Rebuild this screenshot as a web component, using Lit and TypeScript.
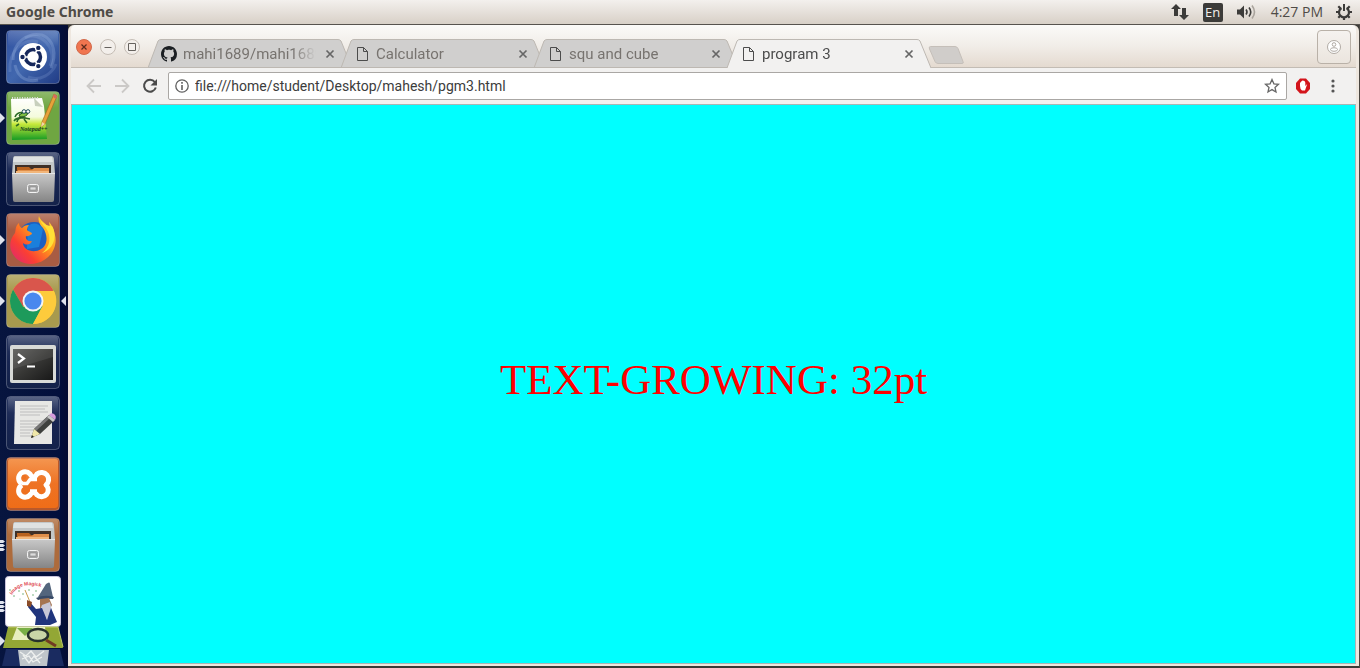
import { LitElement, html, css, svg } from "lit";
import { customElement, property } from "lit/decorators.js";

const page = svg`<path d="M3.500 1.500h6l4 4v9h-10zM9.500 1.500v4h4" fill="none" stroke="#4c4c4c" stroke-width="1"/>`;
const octocat = svg`<path fill="#1b1f23" d="M8 0C3.580 0 0 3.580 0 8c0 3.540 2.290 6.530 5.470 7.590.4.070.55-.17.55-.38 0-.19-.01-.82-.01-1.490-2.010.37-2.530-.49-2.690-.94-.09-.23-.48-.94-.82-1.130-.28-.15-.68-.52-.01-.53.63-.01 1.080.58 1.230.82.72 1.210 1.870.87 2.330.66.07-.52.28-.87.51-1.070-1.780-.2-3.640-.89-3.640-3.950 0-.87.31-1.590.82-2.150-.08-.2-.36-1.020.08-2.120 0 0 .67-.21 2.200.82.64-.18 1.320-.27 2-.27s1.360.09 2 .27c1.530-1.040 2.200-.82 2.200-.82.44 1.100.16 1.920.08 2.120.51.56.82 1.270.82 2.150 0 3.070-1.870 3.750-3.650 3.950.29.25.54.73.54 1.480 0 1.070-.01 1.930-.01 2.200 0 .21.15.46.55.38A8.010 8.010 0 0 0 16 8c0-4.420-3.580-8-8-8z"/>`;

const pips = {
  one: svg`<path d="M0 22l5 5-5 5z" fill="#dfe3ee"/>`,
  two: svg`<path d="M0 22h3l2 1.500-2 1.500H0zM0 26h3l2 1.500-2 1.500H0zM0 30h3l2 1.500-2 1.500H0z" fill="#dfe3ee"/>`,
  active: svg`<path d="M0 22l5 5-5 5zM66 22l-5 5 5 5z" fill="#dfe3ee"/>`,
};

const tile = (fill: string) => svg`
  <rect x="6.500" y="0.500" width="53" height="53" rx="4" fill=${fill} stroke="#ffffff" stroke-opacity=".25"/>
  <rect x="8" y="1" width="50" height="16" rx="3" fill="url(#gloss)"/>`;

const defs = svg`<defs>
  <linearGradient id="gloss" x1="0" y1="0" x2="0" y2="1"><stop offset="0" stop-color="#fff" stop-opacity=".22"/><stop offset="1" stop-color="#fff" stop-opacity="0"/></linearGradient>
  <linearGradient id="night" x1="0" y1="0" x2="0" y2="1"><stop offset="0" stop-color="#2a3862"/><stop offset=".5" stop-color="#182652"/><stop offset="1" stop-color="#14224a"/></linearGradient>
  <linearGradient id="steel" x1="0" y1="0" x2="0" y2="1"><stop offset="0" stop-color="#c9c9c9"/><stop offset="1" stop-color="#858585"/></linearGradient>
  <linearGradient id="dash" x1="0" y1="0" x2="1" y2="1"><stop offset="0" stop-color="#2e4fa0"/><stop offset=".5" stop-color="#4167ae"/><stop offset="1" stop-color="#213c86"/></linearGradient>
  <linearGradient id="pad" x1="0" y1="0" x2="0" y2="1"><stop offset="0" stop-color="#fff"/><stop offset=".45" stop-color="#f4fbdc"/><stop offset=".62" stop-color="#c7e93a"/><stop offset="1" stop-color="#149b24"/></linearGradient>
  <linearGradient id="fox" x1="1" y1="0" x2="0" y2="1"><stop offset="0" stop-color="#ffe93b"/><stop offset=".4" stop-color="#ff9a1c"/><stop offset=".7" stop-color="#fb3f33"/><stop offset="1" stop-color="#d9247c"/></linearGradient>
  <linearGradient id="screen" x1="0" y1="0" x2="1" y2="1"><stop offset="0" stop-color="#5a5a58"/><stop offset=".5" stop-color="#373735"/><stop offset="1" stop-color="#181818"/></linearGradient>
  <linearGradient id="xampp" x1="0" y1="0" x2="0" y2="1"><stop offset="0" stop-color="#f4954f"/><stop offset=".5" stop-color="#ee7324"/><stop offset="1" stop-color="#ef6d18"/></linearGradient>
</defs>`;

const cabinet = svg`
  <path d="M15 4h36q3 0 3 4l1 14H12l1-14q0-4 2-4z" fill="#c3c7c8"/>
  <path d="M14 5h38l1 5H13z" fill="#dfe2e2"/>
  <path d="M15 13h36v11H15z" fill="#3f3027"/>
  <path d="M17 15h12l2 2h18v8H17z" fill="#b8621f"/>
  <path d="M18 18h14l2-2h15v8H18z" fill="#e08f4a"/>
  <path d="M16 19h33v3H16z" fill="#f2b67a"/>
  <path d="M12 21h43l-1 27q0 2-2 2H15q-2 0-2-2z" fill="url(#steel)"/>
  <path d="M12 21.500h43" stroke="#e5e5e5"/>
  <rect x="27.500" y="32.500" width="11" height="8" rx="2" fill="#a5a5a5" stroke="#f4f4f4"/>
  <rect x="30" y="35" width="6" height="3" fill="#ddd" stroke="#777" stroke-width=".5"/>`;

const icons: Record<string, unknown> = {
  dash: svg`${defs}${tile("url(#dash)")}
    <g fill="none" stroke="#9fb8e4" stroke-opacity=".3" stroke-width="3">
      <path d="M13 30C13 12 28 2 42 5C54 10 57 24 51 38M15 35C18 50 30 52 38 50"/>
      <path d="M25 8C40 0 58 18 50 36M10 42C8 20 24 8 38 12M28 47C40 52 52 44 56 34" stroke-opacity=".2"/></g>
    <circle cx="33" cy="27" r="14" fill="#fff"/>
    <circle cx="33" cy="27" r="7.500" fill="none" stroke="#16285c" stroke-width="3.500"/>
    <path d="M33 27L19 27M33 27L40 14.900M33 27L40 39.100" stroke="#fff" stroke-width="1.600"/>
    <g fill="#16285c" stroke="#fff" stroke-width="1.200"><circle cx="22.500" cy="27" r="2.800"/><circle cx="38.300" cy="17.900" r="2.800"/><circle cx="38.300" cy="36.100" r="2.800"/></g>`,
  notes: svg`${tile("#6fa642")}
    <path d="M11 8l31-1 2 8 3 33-35 1z" fill="url(#pad)"/><path d="M34 7l9 9-8-1z" fill="#c8d0bd"/>
    <path d="M12 7h26" stroke="#ddd" stroke-width="2" stroke-dasharray="1 1.500"/>
    <path d="M15 26c2-5 6-5 10-4M14 30c2-3 6-4 12-3M17 31c0-3 3-5 8-4l5 1M19 33l-3 2M24 28l3 4" fill="none" stroke="#2c6b25" stroke-width="1.600"/>
    <path d="M19 24q4-4 9-2-1 4-8 4z" fill="#7fc043" stroke="#194f1c"/>
    <circle cx="24" cy="20.500" r="1.800" fill="#fff" stroke="#1d4d5c"/><circle cx="28" cy="20.500" r="1.800" fill="#fff" stroke="#1d4d5c"/>
    <path d="M57 5l-3-2-12 28-1 5 4-3z" fill="#e7a33a" stroke="#a5651c" stroke-width=".6"/><path d="M57 5l-3-2-1 3 3 2z" fill="#d66a62"/><path d="M42 31l-1 5 4-3z" fill="#f0d9a8"/>
    <text x="20" y="40" class="script">Notepad++</text>`,
  files: svg`${tile("url(#night)")}${cabinet}`,
  firefox: svg`${tile("#a85c43")}
    <circle cx="34" cy="26" r="17" fill="#1c5fc0"/><path d="M28 13q8-6 15 3l-4 18-12 2z" fill="#1a7fdc"/>
    <path d="M39 3q-2 6 4 12c5 7 5 17-2 21-7 5-18 1-18-6 4 3 8 1 9-2-4 1-7-2-6-5 2 1 4-1 6-2 0-2-3-2-5-4q0-3 2-5-5 0-7 3-3-1-3-5c-4 3-3 7-4 10-4 5-6 11-4 17 4 12 16 16 26 13 13-3 21-16 18-28-1-7-4-11-6-13q1 4 0 6c-3-5-9-7-10-12z" fill="url(#fox)"/>
    <path d="M40 4q0 6 6 11c6 8 4 20-4 25 13-4 15-18 10-27-1 1-12-2-12-9z" fill="#ffe037"/>`,
  chrome: svg`${tile("#a89a4e")}
    <circle cx="33" cy="27" r="23" fill="#ffca3a"/>
    <path d="M13.100 15.500A23 23 0 0 1 52.900 15.500L53 17H33L23 33z" fill="#d9564c"/>
    <path d="M13.100 15.500A23 23 0 0 0 33 50L43 32 33 27 23.300 33z" fill="#1d9a5b"/>
    <path d="M33 50A23 23 0 0 0 54 17H33L42.500 32z" fill="#fdcb3c"/>
    <circle cx="33" cy="27" r="10.500" fill="#f4f4f4"/><circle cx="33" cy="27" r="8.600" fill="#4a88ee"/>`,
  terminal: svg`${tile("url(#night)")}
    <rect x="10" y="10" width="46" height="38" rx="2" fill="#d8dad7"/><rect x="13" y="14" width="40" height="31" fill="url(#screen)"/>
    <path d="M13 14h40v8L13 34z" fill="#fff" opacity=".08"/>
    <path d="M18 19l6 4.500-6 4.500M27 31.500h8" fill="none" stroke="#fff" stroke-width="2.200"/>`,
  editor: svg`${tile("url(#night)")}
    <path d="M15 5h37v43H14z" fill="#e7e7e4"/>
    <path d="M20 10h28M20 13h25M20 16h28M20 19h20M20 25h26M20 28h24M20 31h18M20 34h16M20 37h10M20 40h13" stroke="#bdbdbd" stroke-width="1"/>
    <path d="M31 42l3-9 15-14 6 5-15 14z" fill="#3e403d"/><path d="M34 33l15-14 2 2-15 14z" fill="#777"/>
    <path d="M49 19q2-3 5-1t1 6z" fill="#d59add"/><path d="M47 21l6 5 2-2-6-5z" fill="#c8c8c8"/><path d="M31 42l3-9 6 5z" fill="#efe7a8"/><path d="M31 42l1-3 2 2z" fill="#222"/>`,
  xampp: svg`${tile("#b9592a")}
    <rect x="8" y="2" width="50" height="49" rx="3" fill="url(#xampp)"/>
    <path d="M22 27A6.500 6.500 0 1 1 30 17Q33.500 23 37 17A6.500 6.500 0 1 1 46 28A6.500 6.500 0 1 1 37 38Q33.500 33 30 38A6.500 6.500 0 1 1 22 28" fill="none" stroke="#fff" stroke-width="5" stroke-linejoin="round"/>
    <path d="M22 26.500H27L30 22.500H37M30 34h7" fill="none" stroke="#fff" stroke-width="3.500"/>
    <circle cx="24" cy="20" r="2.200" fill="#ee7324"/>`,
  folder: svg`${tile("#ad6b3c")}${cabinet}`,
  stack: svg`
    <rect x="5.500" y="-2.500" width="55" height="50" rx="3" fill="#fff" stroke="#c9c4dc"/>
    <path id="arc" d="M12 16Q21 1 44 9" fill="none"/><text class="magic"><textPath href="#arc">Image Magick</textPath></text>
    <g fill="#66ad73"><circle cx="14" cy="17" r=".8"/><circle cx="19" cy="12" r=".8"/><circle cx="23" cy="15" r=".8"/><circle cx="29" cy="11" r=".8"/><circle cx="36" cy="12" r=".8"/><circle cx="33" cy="16" r=".8"/><circle cx="20" cy="20" r=".6"/><circle cx="10" cy="11" r=".8"/></g>
    <path d="M25 11l5 12" stroke="#c79c4d"/>
    <path d="M38 18l8-13q4-3 4 0l3 13-8 3z" fill="#53657d"/><path d="M36 19q9-4 18-1l-1 2q-9-1-15 1z" fill="#394b68"/>
    <path d="M40 20l9-1 3 7-4 8-8-4z" fill="#a57552"/><path d="M42 26l8-3 3 14-6 3-7-9z" fill="#c7c7d7"/>
    <path d="M29 22l7 8 6-1 5 12 4-12 6 14-7 3H35l1-8-8-10z" fill="#20357d"/><path d="M27 21l5 2-1 5-4-1z" fill="#8b4c28"/>
    <path d="M8 48h50l5 21H3z" fill="#93a735"/><path d="M8 48h50l5 20" fill="none" stroke="#c4d066"/>
    <path d="M17 48h28l2 13H12z" fill="#e7efbf"/><path d="M17 49l8 8 8-8" fill="#78af46"/>
    <ellipse cx="38" cy="56" rx="10" ry="6" fill="#c9d5a7" stroke="#26302c" stroke-width="2.500"/><path d="M46 61l10 6" stroke="#713b22" stroke-width="3"/>
    <path d="M6 70h54l4 17H2z" fill="#1a2b60"/>
    <path d="M18 71h31l-2 16H20z" fill="#bfc5ca"/><path d="M20 73l6 4 5-5 5 6 8-6M22 80l7-3 4 6 9-5M23 76l6 8 5-7 6 7" fill="none" stroke="#eef0ef" stroke-width="1.300"/>
    <path d="M0 57l5 5-5 5z" fill="#dfe3ee"/>`,
};

@customElement("launcher-bar")
export class LauncherBar extends LitElement {
  static styles = css`
    :host { display: flex; flex-direction: column; gap: 7px; width: 68px; flex: none; padding-top: 5px; box-sizing: border-box; overflow: hidden;
      background: linear-gradient(90deg, #07153f, #020f3c 60px, #050d34 66px); }
    .item { display: block; flex: none; width: 68px; height: 54px; padding: 0; border: 0; background: none; overflow: visible; }
    .art { display: block; width: 68px; height: 54px; overflow: visible; }
    .script { font: italic bold 6px "Liberation Serif", serif; fill: #12351a; }
    .magic { font: bold 5px "Liberation Sans", sans-serif; fill: #de4d55; }
  `;
  private items: [string, string, keyof typeof pips | ""][] = [
    ["dash", "Dash", ""], ["notes", "Notepad++", "one"], ["files", "Files", ""], ["firefox", "Firefox", "one"],
    ["chrome", "Google Chrome", "active"], ["terminal", "Terminal", ""], ["editor", "Text Editor", ""],
    ["xampp", "XAMPP", ""], ["folder", "Home folder", "two"], ["stack", "More applications", "two"],
  ];
  render() {
    return this.items.map(([id, name, pip]) => html`<button class="item" aria-label=${name}>
      <svg class="art" viewBox="0 0 68 54">${icons[id]}${pip ? pips[pip] : ""}</svg></button>`);
  }
}

@customElement("browser-tab")
export class BrowserTab extends LitElement {
  @property() label = "";
  @property() icon = "page";
  @property({ type: Boolean, reflect: true }) active = false;
  static styles = css`
    :host { display: grid; flex: 0 1 204px; min-width: 0; height: 29px; margin-right: -11px; color: #77736f; }
    :host([active]) { z-index: 1; color: #4c4c4c; }
    .shape, .content { grid-area: 1 / 1; }
    .shape { width: 100%; height: 29px; }
    .content { display: flex; align-items: center; gap: 6px; min-width: 0; padding: 0 14px 0 13px; z-index: 1; }
    .icon { width: 16px; height: 16px; flex: none; }
    .label { flex: 1; min-width: 0; overflow: hidden; white-space: nowrap; font: 15px/20px Roboto, sans-serif;
      mask-image: linear-gradient(90deg, #000 calc(100% - 24px), transparent); }
    .close { width: 16px; height: 16px; padding: 0; border: 0; background: none; flex: none; }
    .cross { display: block; }
  `;
  render() {
    const fill = this.active ? "#f2f1f0" : "#d0cfce";
    return html`
      <svg class="shape" viewBox="0 0 204 29" preserveAspectRatio="none">
        <path d="M0 29L10 2Q11 .5 13 .5H190Q192 .5 193 2L204 29z" fill=${fill}/>
        <path d="M0 29L10 2Q11 .5 13 .5H190Q192 .5 193 2L204 29" fill="none" stroke="#bdb8b2"/>
        ${this.active ? "" : svg`<path d="M0 28.500H204" stroke="#bdb8b2"/>`}
      </svg>
      <div class="content">
        <svg class="icon" viewBox="0 0 16 16">${this.icon === "github" ? octocat : page}</svg>
        <span class="label">${this.label}</span>
        <button class="close" aria-label="Close tab"><svg class="cross" width="16" height="16"><path d="M4.500 4.500l7 7M11.500 4.500l-7 7" stroke="#666" stroke-width="1.700"/></svg></button>
      </div>`;
  }
}

@customElement("app-root")
export class AppRoot extends LitElement {
  static styles = css`
    :host { display: flex; flex-direction: column; height: 100vh; overflow: hidden; background: #3c3b37; font-family: "Open Sans", sans-serif; }
    button { padding: 0; border: 0; background: none; color: inherit; font: inherit; }
    svg { display: block; }
    .panel { display: flex; align-items: center; justify-content: space-between; height: 25px; flex: none; box-sizing: border-box;
      padding: 0 8px 0 6px; border-bottom: 1px solid #57534e; background: linear-gradient(#f3f0ed, #d8d0c7); color: #4f4b46; }
    .app { font: bold 14px/20px "Noto Sans", sans-serif; }
    .indicators { display: flex; align-items: center; gap: 13px; font: 14px/20px "Open Sans", sans-serif; }
    .lang { width: 20px; height: 19px; border-radius: 2px; background: #3c3b39; color: #f2efec; font: 13px/19px "Open Sans", sans-serif; text-align: center; }
    .desktop { display: flex; flex: 1; min-height: 0; }
    .frame { display: flex; flex: 1; min-width: 0; border-right: 1px solid #4a4641; }
    .window { display: flex; flex-direction: column; flex: 1; min-width: 0; box-sizing: border-box; margin-bottom: 2px;
      border: solid #eee7df; border-width: 0 3px 2px; border-radius: 6px 6px 0 0; background: #f2f1f0; }
    .titlebar { display: flex; height: 43px; flex: none; box-sizing: border-box; padding: 0 5px;
      border-radius: 5px 5px 0 0; border-bottom: 1px solid #c3bcb4; background: linear-gradient(#fbfaf8, #f1ede8 50%, #e4dad0); }
    .controls { display: flex; gap: 8px; padding-top: 14px; height: 16px; }
    .tabs { display: flex; align-items: flex-start; flex: 1; min-width: 0; padding: 14px 0 0 8px; }
    .newtab { flex: none; margin: 7px 0 0 8px; height: 18px; }
    .user { width: 34px; height: 34px; margin-top: 5px; border: 1px solid #b9b1a8; border-radius: 4px; display: grid; place-items: center;
      box-sizing: border-box; background: linear-gradient(#f5f2ef, #ebe5de); }
    .toolbar { display: flex; align-items: center; height: 36px; flex: none; padding: 0 15px; box-sizing: border-box; }
    .nav { display: flex; gap: 12px; padding-right: 10px; }
    .address { display: flex; align-items: center; gap: 6px; flex: 1; min-width: 0; height: 28px; box-sizing: border-box; padding: 0 6px;
      border: 1px solid #aaa7a4; border-radius: 2px; background: #fff; }
    .url { flex: 1; min-width: 0; padding: 0; border: 0; outline: 0; background: none; color: #3c3c3c; font: 14px/20px Roboto, sans-serif; }
    .extras { display: flex; gap: 14px; padding-left: 8px; }
    .view { display: grid; place-items: center; flex: 1; min-height: 0; border: 1px solid #a9b5b5; background: cyan padding-box; }
    .grow { margin: 0; padding-bottom: 8px; color: #f00; font: 43px/50px "Liberation Serif", serif; text-align: center; }
  `;
  render() {
    return html`
      <header class="panel">
        <span class="app">Google Chrome</span>
        <div class="indicators">
          <svg width="20" height="18" viewBox="0 0 20 18"><path d="M6 1L11 6H8v7H4V6H1zM14 17L9 12h3V5h4v7h3z" fill="#3c3b39"/></svg>
          <span class="lang">En</span>
          <svg width="22" height="16" viewBox="0 0 22 16"><path d="M1 5.500h3L8 1.500v13L4 10.500H1z" fill="#3c3b39"/><path d="M10 5.500q2 2.500 0 5M13 3.500q3.500 4.500 0 9" fill="none" stroke="#3c3b39" stroke-width="1.600"/><path d="M16 1.500q5 6.500 0 13" fill="none" stroke="#aaa49d" stroke-width="1.600"/></svg>
          <time>4:27 PM</time>
          <svg width="16" height="16" viewBox="0 0 16 16"><g stroke="#3c3b39" stroke-width="2.200" fill="none"><path d="M5.500 4A5 5 0 1 0 10.500 4"/><path d="M8 0v7" stroke-width="2"/><path d="M8 13v3M0 8h3M13 8h3M2.300 13.700l2.200-2.200M13.700 13.700l-2.200-2.200M2.300 2.300l2.200 2.200M13.700 2.300l-2.200 2.200"/></g></svg>
        </div>
      </header>
      <main class="desktop">
        <launcher-bar></launcher-bar>
        <div class="frame">
        <section class="window">
          <div class="titlebar">
            <div class="controls">
              <button aria-label="Close"><svg width="16" height="16"><circle cx="8" cy="8" r="7.500" fill="#f0754f" stroke="#d1694b"/><path d="M5.500 5.500l5 5M10.500 5.500l-5 5" stroke="#5b2b1d" stroke-width="1.200"/></svg></button>
              <button aria-label="Minimize"><svg width="16" height="16"><circle cx="8" cy="8" r="7.500" fill="#f3efeb" stroke="#c5bdb5"/><path d="M4.500 8.500h7" stroke="#66625e"/></svg></button>
              <button aria-label="Maximize"><svg width="16" height="16"><circle cx="8" cy="8" r="7.500" fill="#f3efeb" stroke="#c5bdb5"/><path d="M4.500 4.500h7v7h-7z" fill="none" stroke="#66625e"/></svg></button>
            </div>
            <nav class="tabs">
              <browser-tab icon="github" label="mahi1689/mahi1689"></browser-tab>
              <browser-tab label="Calculator"></browser-tab>
              <browser-tab label="squ and cube"></browser-tab>
              <browser-tab active label="program 3"></browser-tab>
              <button class="newtab" aria-label="New tab"><svg width="36" height="18"><path d="M2.500.5H27q2 0 3 2l5 13q1 2-1 2H10q-2 0-3-2L1.500 3Q.5.500 2.500.5z" fill="#d0cdca" stroke="#c5bfb9"/></svg></button>
            </nav>
            <button class="user" aria-label="User"><svg width="14" height="14" fill="none" stroke="#b0aaa4"><circle cx="7" cy="7" r="6.500" fill="#fff"/><circle cx="7" cy="4.500" r="1.800"/><ellipse cx="7" cy="9.500" rx="3.500" ry="1.800"/></svg></button>
          </div>
          <div class="toolbar">
            <div class="nav">
              <button aria-label="Back"><svg width="16" height="16"><path d="M15 8H2M8 1.500L1.500 8 8 14.500" fill="none" stroke="#cbc9c7" stroke-width="1.800"/></svg></button>
              <button aria-label="Forward"><svg width="16" height="16"><path d="M1 8h13M8 1.500L14.500 8 8 14.500" fill="none" stroke="#cbc9c7" stroke-width="1.800"/></svg></button>
              <button aria-label="Reload"><svg width="16" height="16"><path d="M12.800 4A6 6 0 1 0 13.800 9.500" fill="none" stroke="#4b4b4b" stroke-width="2"/><path d="M15 1v6.500H8.500z" fill="#4b4b4b"/></svg></button>
            </div>
            <div class="address">
              <svg width="14" height="14"><circle cx="7" cy="7" r="6.200" fill="none" stroke="#5f5f5f" stroke-width="1.300"/><path d="M7 6v5M7 3v1.700" stroke="#5f5f5f" stroke-width="1.600"/></svg>
              <input class="url" aria-label="Address" value="file:///home/student/Desktop/mahesh/pgm3.html"/>
              <button aria-label="Bookmark"><svg width="16" height="16"><path d="M8 1.500l1.900 4.300 4.600.5-3.500 3.100 1 4.600L8 11.600 4 14l1-4.600L1.500 6.300l4.600-.5z" fill="none" stroke="#666" stroke-width="1.300"/></svg></button>
            </div>
            <div class="extras">
              <button aria-label="Content blocker"><svg width="16" height="16"><path d="M5 0.500h6l4 4.500v6L11 15.500H5L1 11V5z" fill="#d3141b"/><path d="M5 8V5l1.300-1.500L7.500 2.500l2 .5.800 1.500V8l1.900-2L10 12.500H7q-2-1.500-2-4.500z" fill="#fff"/></svg></button>
              <button aria-label="Menu"><svg width="16" height="16" fill="#555"><circle cx="8" cy="3" r="1.600"/><circle cx="8" cy="8" r="1.600"/><circle cx="8" cy="13" r="1.600"/></svg></button>
            </div>
          </div>
          <article class="view"><p class="grow">TEXT-GROWING: 32pt</p></article>
        </section>
        </div>
      </main>`;
  }
}
